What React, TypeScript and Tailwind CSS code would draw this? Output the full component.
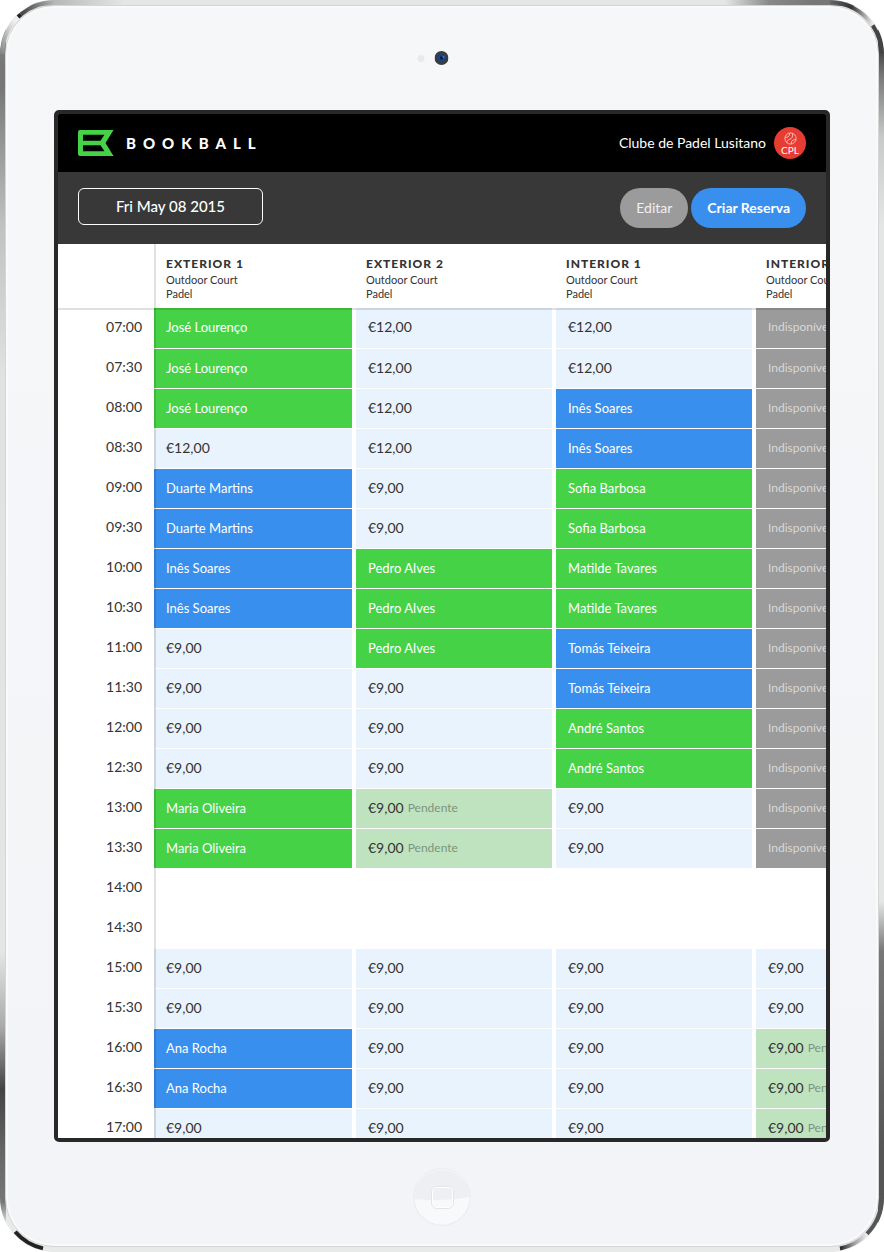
import React from "react";

type Kind = "free" | "green" | "blue" | "pending" | "off" | "empty";
type Slot = { kind: Kind; text: string };

const slot = (kind: Kind, text: string): Slot => ({ kind, text });
const repeat = (count: number, value: Slot): Slot[] => Array.from({ length: count }, () => value);

const closed = repeat(2, slot("empty", ""));
const nine = slot("free", "€9,00");
const twelve = slot("free", "€12,00");
const pending = slot("pending", "€9,00");

const courts: { name: string; slots: Slot[] }[] = [
  {
    name: "Exterior 1",
    slots: [
      ...repeat(3, slot("green", "José Lourenço")),
      twelve,
      ...repeat(2, slot("blue", "Duarte Martins")),
      ...repeat(2, slot("blue", "Inês Soares")),
      ...repeat(4, nine),
      ...repeat(2, slot("green", "Maria Oliveira")),
      ...closed,
      ...repeat(2, nine),
      ...repeat(2, slot("blue", "Ana Rocha")),
      nine,
    ],
  },
  {
    name: "Exterior 2",
    slots: [
      ...repeat(4, twelve),
      ...repeat(2, nine),
      ...repeat(3, slot("green", "Pedro Alves")),
      ...repeat(3, nine),
      ...repeat(2, pending),
      ...closed,
      ...repeat(5, nine),
    ],
  },
  {
    name: "Interior 1",
    slots: [
      ...repeat(2, twelve),
      ...repeat(2, slot("blue", "Inês Soares")),
      ...repeat(2, slot("green", "Sofia Barbosa")),
      ...repeat(2, slot("green", "Matilde Tavares")),
      ...repeat(2, slot("blue", "Tomás Teixeira")),
      ...repeat(2, slot("green", "André Santos")),
      ...repeat(2, nine),
      ...closed,
      ...repeat(5, nine),
    ],
  },
  {
    name: "Interior 2",
    slots: [
      ...repeat(14, slot("off", "Indisponível")),
      ...closed,
      ...repeat(2, nine),
      ...repeat(3, pending),
    ],
  },
];

const times = Array.from({ length: 21 }, (_, i) => {
  const hour = String(7 + Math.floor(i / 2)).padStart(2, "0");
  return `${hour}:${i % 2 ? "30" : "00"}`;
});

const kindClass: Record<Kind, string> = {
  free: "bg-[#e9f3fe] text-[#333333] text-sm",
  green: "bg-[#46d246] text-white text-[13px]",
  blue: "bg-[#398fee] text-white text-[13px]",
  pending: "bg-[#c0e3bf] text-[#333333] text-sm",
  off: "bg-[#9b9b9b] text-[#d8d8d8] text-xs",
  empty: "bg-white",
};

function Logo() {
  return (
    <svg viewBox="0 0 36 26" className="h-[26px] w-9" aria-hidden="true">
      <path
        fillRule="evenodd"
        fill="#46d246"
        d="M2 0H35.5L27.5 13L35.5 26H2Q0 26 0 24V2Q0 0 2 0ZM5 4.8V10.8H22.5L26.5 4.8ZM5 15.2V21.2H26.5L22.5 15.2Z"
      />
    </svg>
  );
}

function ClubBadge() {
  return (
    <span className="flex size-8 flex-col items-center justify-center rounded-full bg-[#e73c31] text-white">
      <svg viewBox="0 0 14 14" className="size-[13px]" fill="none" stroke="#ffd0cc" strokeWidth="0.9" aria-hidden="true">
        <circle cx="7" cy="7" r="6" />
        <path d="M1.2 5.8C4 6.2 6.4 4.5 6.2 1.1M3.2 11.5C2.8 9 4.4 8.6 6.4 7.8C8.4 7 9.6 5.6 9.2 1.5M7.8 12.9C7.4 9.8 9.8 7.8 12.8 8.2" />
      </svg>
      <span className="text-[10px] leading-[10px]">CPL</span>
    </span>
  );
}

function Corner({ className, children }: { className: string; children: React.ReactNode }) {
  return (
    <svg
      viewBox="0 0 64 64"
      className={`pointer-events-none absolute size-16 ${className}`}
      fill="none"
      strokeWidth="4"
      aria-hidden="true"
    >
      {children}
    </svg>
  );
}

function CornerGradients() {
  return (
    <svg className="absolute size-0" aria-hidden="true">
      <defs>
        <linearGradient id="tl-side" x1="0" y1="1" x2="0.6" y2="0">
          <stop offset="0" stopColor="#888" />
          <stop offset="1" stopColor="#f0f0f0" />
        </linearGradient>
        <linearGradient id="tl-top" x1="0" y1="0" x2="1" y2="0">
          <stop offset="0" stopColor="#444" />
          <stop offset="1" stopColor="#b4b6b5" />
        </linearGradient>
        <linearGradient id="tr-top" x1="0" y1="0" x2="1" y2="0">
          <stop offset="0" stopColor="#666" />
          <stop offset="0.5" stopColor="#333" />
          <stop offset="1" stopColor="#eee" />
        </linearGradient>
        <linearGradient id="br-base" x1="0" y1="0" x2="1" y2="0">
          <stop offset="0" stopColor="#222" />
          <stop offset="0.5" stopColor="#999" />
          <stop offset="1" stopColor="#eee" />
        </linearGradient>
      </defs>
    </svg>
  );
}

function Schedule() {
  return (
    <div className="relative min-h-0 flex-1 overflow-auto bg-white [scrollbar-width:none]">
      <table className="w-[898px] table-fixed border-separate border-spacing-0 text-[#333333]">
        <colgroup>
          <col className="w-24" />
          <col className="w-[202px]" />
          <col className="w-[200px]" />
          <col className="w-[200px]" />
          <col className="w-[200px]" />
        </colgroup>
        <thead>
          <tr className="h-16">
            <td className="p-0" />
            {courts.map((court, i) => (
              <th
                key={court.name}
                scope="col"
                className={`${i === 0 ? "pl-3" : "pl-2.5"} py-0 pr-0 pt-1 text-left align-middle font-normal`}
              >
                <div className="text-xs leading-[18px] font-black tracking-[1px] whitespace-nowrap uppercase">{court.name}</div>
                <div className="text-[11px] leading-[14px]">Outdoor Court</div>
                <div className="text-[11px] leading-[14px]">Padel</div>
              </th>
            ))}
          </tr>
        </thead>
        <tbody>
          {times.map((time, row) => (
            <tr key={time} className={row === 0 ? "h-[41px]" : "h-10"}>
              <th scope="row" className="p-0 pr-3 pb-1 text-right text-sm leading-5 font-normal">
                {time}
              </th>
              {courts.map((court) => {
                const cell = court.slots[row];
                return (
                  <td key={court.name} className="p-0 pr-1 pb-px">
                    <div
                      className={`flex items-center gap-1 px-3 pb-0.5 leading-5 whitespace-nowrap ${row === 0 ? "h-10" : "h-[39px]"} ${kindClass[cell.kind]}`}
                    >
                      {cell.text}
                      {cell.kind === "pending" && <span className="text-xs leading-5 text-[#7c947c]">Pendente</span>}
                    </div>
                  </td>
                );
              })}
            </tr>
          ))}
        </tbody>
      </table>
      <div className="pointer-events-none absolute top-0 left-24 h-[905px] w-0.5 bg-black/12" />
      <div className="pointer-events-none absolute top-16 left-0 h-0.5 w-[898px] bg-black/12" />
    </div>
  );
}

export default function App() {
  return (
    <div className="relative h-screen overflow-hidden bg-white font-[Lato,'Open_Sans',sans-serif]">
      <div className="h-full rounded-[54px] p-[5px] [background:linear-gradient(180deg,#999_0,#777_5%,#777_7%,#c0c2c1_18%,#e0e2e1_30%,#e4e6e5_76%,#aaa_82%,#444_87%,#666_92%,#777_96%,#eee_98%)_left/6px_100%_no-repeat,linear-gradient(180deg,#444_0,#444_4%,#777_6%,#c8cac9_11%,#e4e6e5_18%,#e4e6e5_72%,#777_76%,#555_92%,#555_100%)_right/6px_100%_no-repeat,linear-gradient(90deg,#aaa_4%,#e4e6e5_14%,#e4e6e5_82%,#888_87%,#777_92%)_top/100%_6px_no-repeat,#e8e9e9]">
        <div className="relative flex h-full flex-col rounded-[49px] border border-[#d4d6d6] bg-[linear-gradient(180deg,#f6f7f9,#f3f4f7)] px-12 pt-[104px] pb-[104px] shadow-[inset_0_0_0_2px_#fafafb]">
          <div className="absolute top-[45px] left-1/2 flex -translate-x-1/2 items-center gap-2.5 pr-[18px]">
            <span className="size-[7px] rounded-full bg-[#e8e9eb]" />
            <svg viewBox="0 0 14 14" className="size-[14px]" aria-hidden="true">
              <circle cx="7" cy="7" r="7" fill="#3c3c40" />
              <circle cx="7" cy="7" r="3.8" fill="#14468c" />
              <circle cx="7" cy="7" r="1.4" fill="#071226" />
              <circle cx="9" cy="6" r="0.9" fill="#3787e0" />
            </svg>
          </div>

          <main className="flex min-h-0 flex-1 flex-col overflow-hidden rounded-[5px] border-4 border-[#282828] bg-white">
            <header className="flex h-[58px] shrink-0 items-center justify-between bg-black px-5 text-white">
              <div className="flex items-center gap-3">
                <Logo />
                <span className="text-[15px] font-black tracking-[7px]">BOOKBALL</span>
              </div>
              <div className="flex items-center gap-2 text-sm">
                Clube de Padel Lusitano
                <ClubBadge />
              </div>
            </header>
            <div className="flex h-[72px] shrink-0 items-center justify-between bg-[#383838] px-5 text-white">
              <button type="button" className="mb-1 h-[37px] w-[185px] rounded-md border border-white text-[15px] font-medium">
                Fri May 08 2015
              </button>
              <div className="flex gap-[3px]">
                <button type="button" className="h-10 rounded-full bg-[#9b9b9b] px-4 text-sm text-[#f0f0f0]">
                  Editar
                </button>
                <button type="button" className="h-10 rounded-full bg-[#398fee] px-4 text-sm font-bold">
                  Criar Reserva
                </button>
              </div>
            </div>
            <Schedule />
          </main>

          <svg viewBox="0 0 58 58" className="absolute bottom-[20px] left-1/2 size-[58px] -translate-x-1/2" aria-hidden="true">
            <circle cx="29" cy="29" r="28.3" fill="#f8f9fa" stroke="#e9eaec" strokeWidth="1" />
            <path d="M1 31A28 28 0 1 1 57 29Q29 34 1 31Z" fill="#eeeff2" />
            <rect x="19" y="19" width="21" height="21" rx="5" fill="none" stroke="#fff" strokeWidth="2" />
            <rect x="18.5" y="18.5" width="22" height="22" rx="5.5" fill="none" stroke="#dcdddf" strokeWidth="0.8" />
          </svg>
        </div>
      </div>
      <CornerGradients />
      <Corner className="top-0 left-0">
        <path d="M2.5 54A51.5 51.5 0 0 1 18 17.1" stroke="url(#tl-side)" />
        <path d="M21 14.4A51.5 51.5 0 0 1 54 2.5" stroke="url(#tl-top)" />
        <path d="M18 17.1L21 14.4" stroke="#222" />
      </Corner>
      <Corner className="top-0 right-0">
        <path d="M10 2.5A51.5 51.5 0 0 1 52.7 25.3" stroke="url(#tr-top)" />
        <path d="M52.7 25.3A51.5 51.5 0 0 1 61.5 54" stroke="#444" />
      </Corner>
      <Corner className="bottom-0 left-0">
        <path d="M15.2 43.8A51.5 51.5 0 0 0 43 60.4" stroke="#222" />
      </Corner>
      <Corner className="right-0 bottom-0">
        <path d="M61.5 10A51.5 51.5 0 0 1 46.9 45.9" stroke="#555" />
        <path d="M46.9 45.9A51.5 51.5 0 0 1 20 60.5" stroke="url(#br-base)" />
      </Corner>
    </div>
  );
}
